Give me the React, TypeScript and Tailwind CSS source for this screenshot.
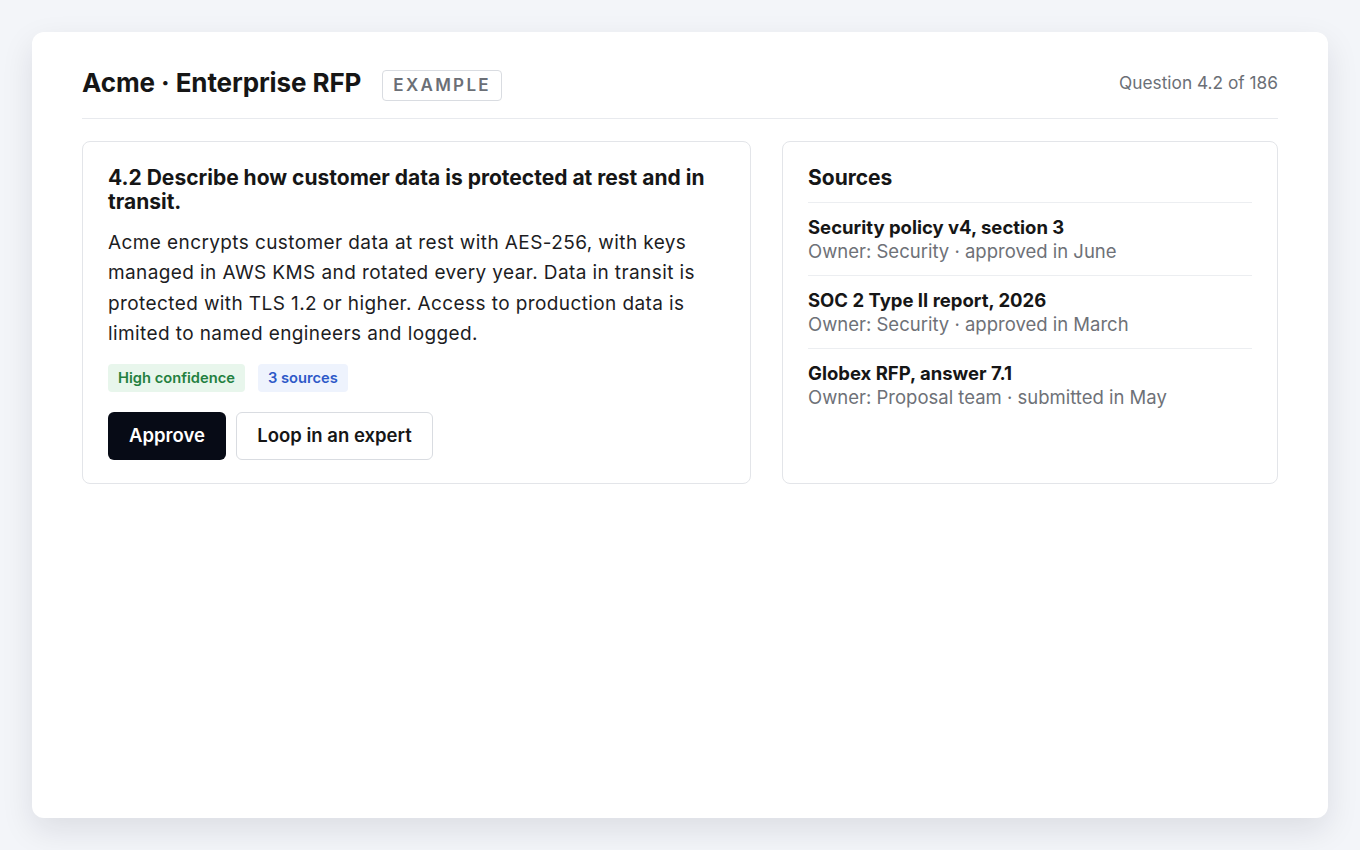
import React from "react";

const sources = [
  { title: "Security policy v4, section 3", sub: "Owner: Security · approved in June" },
  { title: "SOC 2 Type II report, 2026", sub: "Owner: Security · approved in March" },
  { title: "Globex RFP, answer 7.1", sub: "Owner: Proposal team · submitted in May" },
];

export default function App() {
  return (
    <div
      className="min-h-[850px] bg-[#f3f5f9] p-8"
      style={{ fontFamily: "Inter, 'Noto Sans', sans-serif" }}
    >
      <div className="h-[786px] rounded-xl bg-white px-[50px] pt-[31px] shadow-[0_12px_32px_rgba(15,23,42,0.10)]">
        <div className="flex items-center justify-between border-b border-[#e8eaee] pb-[15px]">
          <div className="flex items-center gap-[21px]">
            <h1 className="text-[26px] font-bold leading-[40px] text-[#161616] tracking-[-0.1px]">
              Acme · Enterprise RFP
            </h1>
            <span className="mt-[4px] rounded-[4px] border border-[#d9dce1] px-[10px] py-[3px] text-[17px] font-semibold leading-[23px] tracking-[2.3px] text-[#6b6f76]">
              EXAMPLE
            </span>
          </div>
          <div className="text-[17.3px] text-[#6b6f76]">Question 4.2 of 186</div>
        </div>

        <div className="mt-[22px] grid grid-cols-[669px_1fr] gap-[31px]">
          <div className="rounded-lg border border-[#e3e5e9] px-[25px] pb-[23px] pt-[24px]">
            <h2 className="text-[21px] font-bold leading-[24px] text-[#161616]">
              4.2 Describe how customer data is protected at rest and in transit.
            </h2>
            <p className="mt-[14px] text-[19px] leading-[30.4px] tracking-[0.4px] text-[#1d1d1f]">
              Acme encrypts customer data at rest with AES-256, with keys managed in AWS KMS and
              rotated every year. Data in transit is protected with TLS 1.2 or higher. Access to
              production data is limited to named engineers and logged.
            </p>
            <div className="mt-[14px] flex gap-[13px]">
              <span className="rounded-[4px] bg-[#e8f6ec] px-[10px] text-[14.7px] font-semibold leading-[28px] text-[#23803f]">
                High confidence
              </span>
              <span className="rounded-[4px] bg-[#eef3fd] px-[10px] text-[14.7px] font-semibold leading-[28px] text-[#2d59c8]">
                3 sources
              </span>
            </div>
            <div className="mt-[20px] flex gap-[10px]">
              <button className="h-[48px] w-[118px] rounded-[6px] bg-[#070b16] text-[18.5px] font-semibold text-white">
                Approve
              </button>
              <button className="h-[48px] w-[197px] rounded-[6px] border border-[#d9dce1] bg-white text-[18.5px] font-semibold text-[#161616]">
                Loop in an expert
              </button>
            </div>
          </div>

          <div className="rounded-lg border border-[#e3e5e9] px-[25px] pt-[24px]">
            <h2 className="border-b border-[#eceef1] pb-[12px] text-[21px] font-bold leading-[24px] text-[#161616]">
              Sources
            </h2>
            {sources.map((s, i) => (
              <div
                key={s.title}
                className={`py-[12px] ${i < sources.length - 1 ? "border-b border-[#eceef1]" : ""}`}
              >
                <div className="text-[18.5px] font-bold leading-[24px] text-[#161616]">{s.title}</div>
                <div className="text-[18.5px] leading-[24px] text-[#6e7177]">{s.sub}</div>
              </div>
            ))}
          </div>
        </div>
      </div>
    </div>
  );
}
